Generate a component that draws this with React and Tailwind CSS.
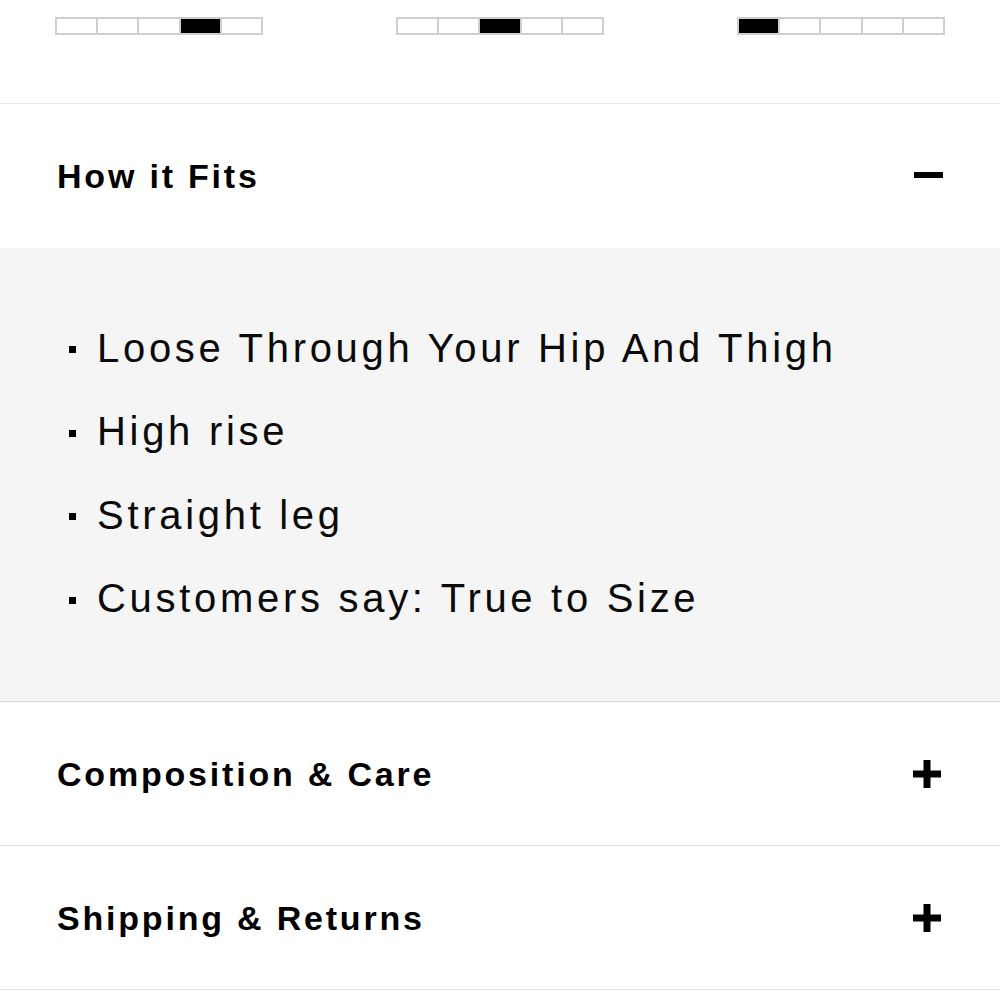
import React from "react";

function Bar({ active }) {
  return (
    <div className="flex w-[208px] h-[18px] border-2 border-[#cfcfcf] bg-white">
      {[0, 1, 2, 3, 4].map((i) => (
        <div
          key={i}
          className={
            "flex-1 " +
            (i > 0 ? "border-l-2 border-[#cfcfcf] " : "") +
            (i === active ? "bg-black" : "bg-white")
          }
        />
      ))}
    </div>
  );
}

function Plus() {
  return (
    <svg width="28" height="28" viewBox="0 0 28 28" className="block">
      <rect x="0" y="10.5" width="28" height="7" fill="#000" />
      <rect x="10.5" y="0" width="7" height="28" fill="#000" />
    </svg>
  );
}

function Header({ title, icon, h }) {
  return (
    <div className={"flex items-center justify-between pl-[57px] pr-[59px] " + h}>
      <span className="text-[34px] font-bold tracking-[2.8px] text-black leading-none">
        {title}
      </span>
      {icon}
    </div>
  );
}

export default function App() {
  const items = [
    "Loose Through Your Hip And Thigh",
    "High rise",
    "Straight leg",
    "Customers say: True to Size",
  ];
  return (
    <div
      className="w-[1000px] h-[1000px] bg-white overflow-hidden"
      style={{ fontFamily: '"Liberation Sans", Arial, sans-serif' }}
    >
      <div className="h-[104px] border-b border-[#e6e6e6] pt-[17px] px-[55px] flex justify-between items-start">
        <Bar active={3} />
        <Bar active={2} />
        <Bar active={0} />
      </div>
      <Header
        title="How it Fits"
        h="h-[144px]"
        icon={<div className="w-[29px] h-[6px] bg-black mr-[-2px] mt-[-2px]" />}
      />
      <div className="h-[454px] bg-[#f5f5f5] border-b border-[#d6d6d6] pt-[58px] pl-[69px]">
        <ul className="flex flex-col">
          {items.map((t) => (
            <li key={t} className="flex items-center h-[83.5px]">
              <span className="w-[7px] h-[7px] bg-black mr-[21px] mt-[4px]" />
              <span className="text-[40px] tracking-[3.7px] text-[#0a0a0a] leading-none">
                {t}
              </span>
            </li>
          ))}
        </ul>
      </div>
      <div className="h-[144px] border-b border-[#dedede] flex flex-col">
        <Header title="Composition & Care" h="flex-1" icon={<Plus />} />
      </div>
      <div className="h-[144px] border-b border-[#e3e3e3] flex flex-col">
        <Header title="Shipping & Returns" h="flex-1" icon={<Plus />} />
      </div>
    </div>
  );
}
